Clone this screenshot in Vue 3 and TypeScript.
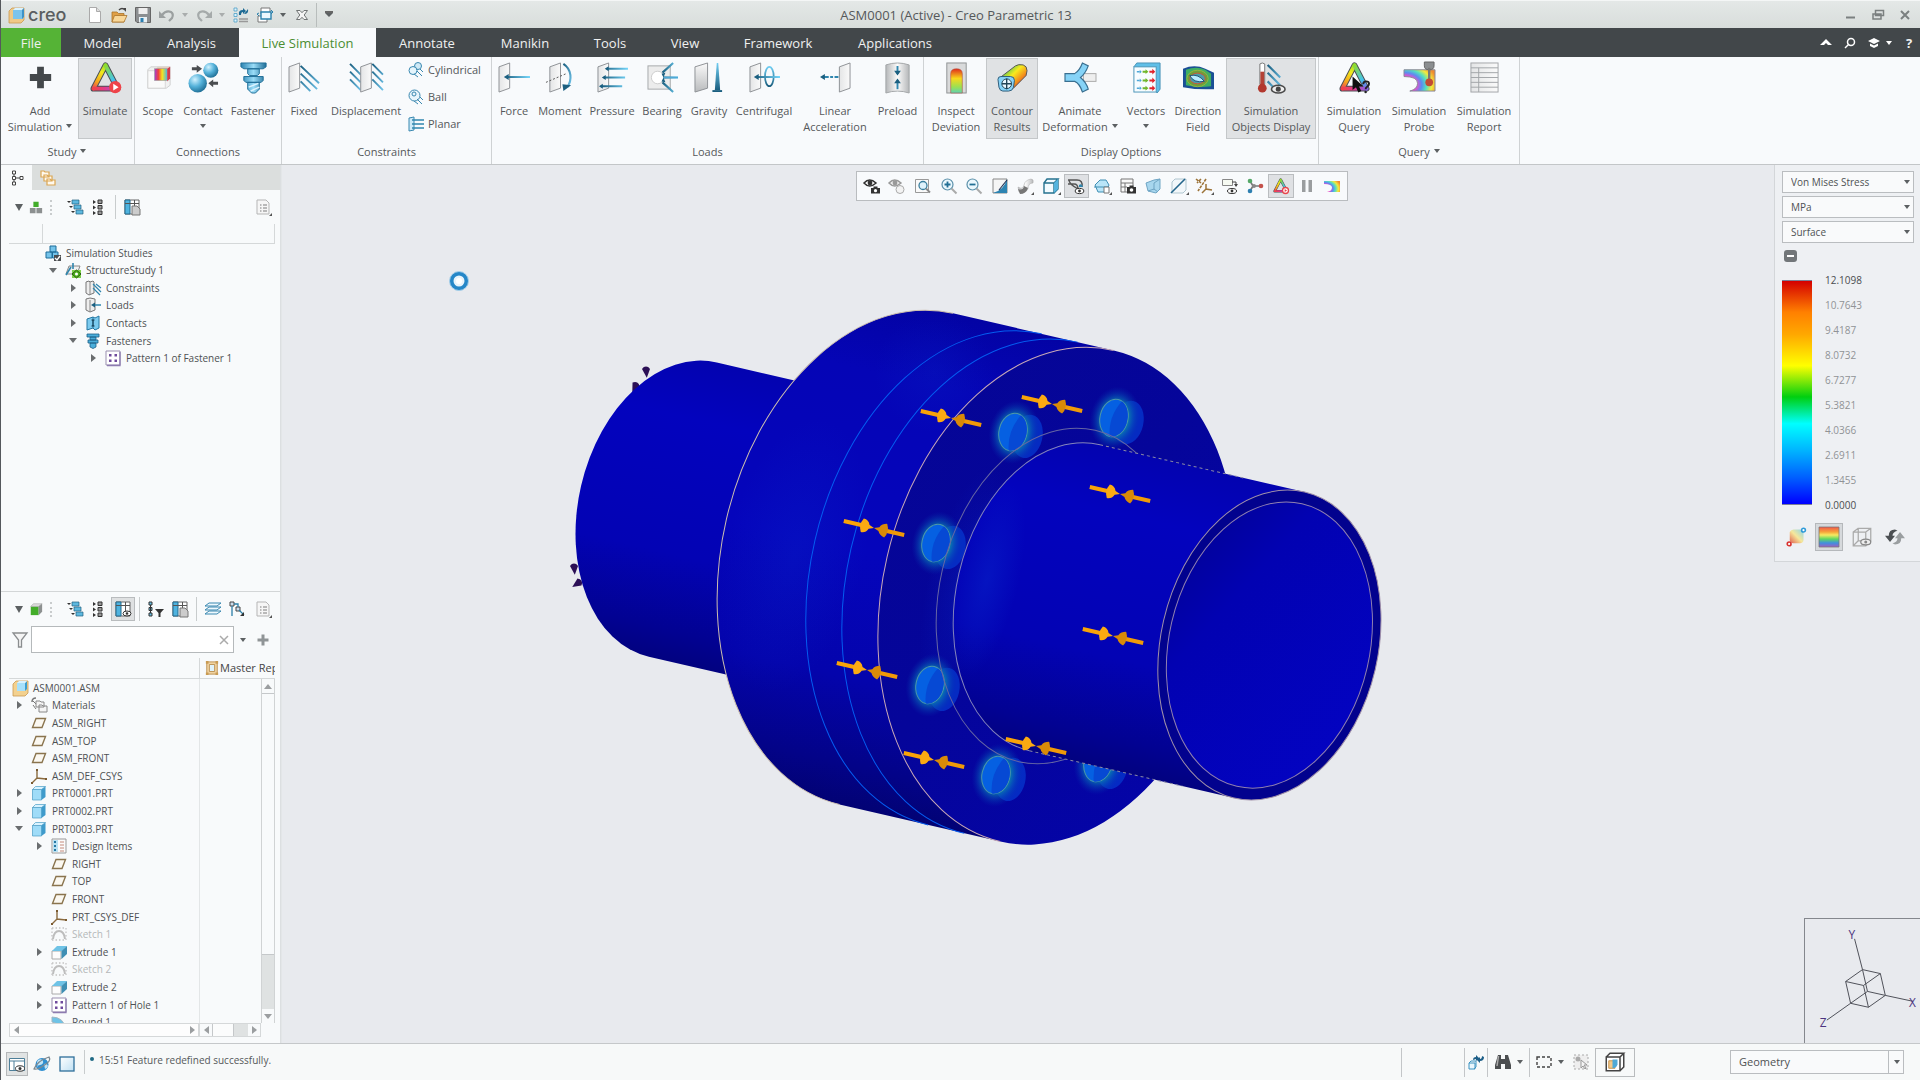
<script setup lang="ts">
import { ref } from 'vue'

interface RibbonItem { label: string; icon: string; w: number; on?: boolean; caret?: 'inline' | 'below' }
interface RibbonGroup { name: string; caret?: boolean; items: RibbonItem[]; small?: { label: string; icon: string }[] }
interface TreeRow { label: string; icon: string; level: number; exp?: 'open' | 'closed'; dim?: boolean }

const rainbow = (w: number) => `
  <path d="M16 3.500L28.500 27.500H3.500Z" fill="none" stroke="#4a4f55" stroke-width="${w + 2}" stroke-linejoin="round"/>
  <path d="M3.500 27.500L16 3.500" stroke="url(#triL)" stroke-width="${w}" stroke-linecap="round"/>
  <path d="M28.500 27.500L16 3.500" stroke="url(#triR)" stroke-width="${w}" stroke-linecap="round"/>
  <path d="M4 27.500H28" stroke="url(#triB)" stroke-width="${w}" stroke-linecap="round"/>`
const plate = (x: number) => `<path d="M${x} 5L${x + 11} 1V27L${x} 31Z" fill="url(#plate)" stroke="#8d9195"/>`
const hatch = (x: number) => `<path d="M${x} 2l11 11M${x} 10l11 11M${x} 18l11 11" stroke="url(#steel)" stroke-width="2" fill="none"/>`

const ic: Record<string, string> = {
  add: '<path d="M12.500 5h7v7.500H27v7h-7.500V27h-7v-7.500H5v-7h7.500z" fill="#44484b"/>',
  simulate: rainbow(4) + '<circle cx="26" cy="26" r="6.300" fill="#ee4349"/><path d="M24 22.500v7l5.500-3.500z" fill="#fff"/>',
  scope: '<path d="M5 8l3-3h20v19l-4 3H5z" fill="#f1f1f1" stroke="#cfcfcf"/><path d="M5 9h18v18H5z" fill="#fafafa" stroke="#d6d6d6"/><path d="M13 8l2-3h13l-3 3z" fill="#e6d0c0"/><rect x="12" y="7" width="13" height="12" fill="url(#spec)" stroke="#888" stroke-width=".5"/><path d="M25 7l3-2v12l-3 3z" fill="#d43a4a"/>',
  contact: '<circle cx="10" cy="22" r="9.500" fill="url(#ball)"/><circle cx="23.500" cy="8.500" r="7.800" fill="url(#ball)"/><path d="M4 5.500h5V3l5.500 4L9 11V8.500H4zM31 20.500h-5V18l-5 4 5 4v-2.500h5z" fill="#4a4d50"/>',
  fastener: '<path d="M3 1h26v4l-3 2H6L3 5zM10 7h12v5l-2 2h-8l-2-2zM6 15h20v4l-2 2H8l-2-2zM10 21h12v7l-4 4h-4l-4-4z" fill="url(#bolt)" stroke="#1f6e98"/><path d="M11 26l10-4M13 30l9-4" stroke="#dff4ff" stroke-width="1.500"/>',
  fixed: plate(0) + '<path d="M12 4l19 18M12 12l17 16M12 20l10 10" stroke="url(#steel)" stroke-width="2" fill="none"/>',
  displacement: hatch(-1) + plate(10) + hatch(22),
  force: plate(0) + '<path d="M8 15.500h24" stroke="url(#steelH)" stroke-width="2"/><path d="M5 15.500l5-3v6z" fill="#1b5f80"/>',
  moment: plate(5) + '<path d="M1 21L22 12" stroke="#555" stroke-dasharray="2 2"/><path d="M19 2c9 6 9 17 4 24" stroke="url(#steel)" stroke-width="2.200" fill="none"/><path d="M18 23l9 1-8 6z" fill="#1b5f80"/>',
  pressure: plate(1) + '<path d="M10 7h22M7 16h22M4 25h22" stroke="url(#steelH)" stroke-width="2"/><path d="M8 7l4-2.500v5zM5 16l4-2.500v5zM2 25l4-2.500v5z" fill="#1b5f80"/>',
  bearing: '<rect x="1" y="4" width="23" height="24" fill="#ececec" stroke="#a5a8aa"/><circle cx="11" cy="16" r="6.500" fill="#fff" stroke="#ccc"/><path d="M16 11L27 1M17 16h15M16 21l11 10" stroke="url(#steelS)" stroke-width="2.200"/><path d="M17 15.200h15v1.600H17z" fill="#4fa9d6"/><path d="M15 12l4-1-2 5zM15 20l4 1-2-5z" fill="#1b5f80"/>',
  gravity: '<path d="M1 5L14 1V27L1 31Z" fill="url(#shadeV)" stroke="#8d9195"/><path d="M23.500 1h1.500l2 28h-5.500z" fill="url(#steelV)"/><path d="M19 29h10v2H19z" fill="#1b5f80"/>',
  centrifugal: plate(1) + '<ellipse cx="21" cy="15" rx="4.500" ry="10" fill="none" stroke="url(#steelV)" stroke-width="1.800"/><path d="M8 15.500h24" stroke="url(#steelH)" stroke-width="2"/><path d="M5 15.500l5-3v6z" fill="#1b5f80"/>',
  linear: '<path d="M20 5L31 1V27L20 31Z" fill="url(#plate)" stroke="#8d9195"/><path d="M4 15.500h15" stroke="#2f86ae" stroke-width="2.200" stroke-dasharray="5 1.500 3 1.500"/><path d="M0 15.500l5-3v6z" fill="#1b5f80"/>',
  preload: '<path d="M4 3q12-4 24 0v29q-12-4-24 0z" fill="url(#cyl)" stroke="#a2a5a7"/><path d="M16 4v8M16 28v-9" stroke="#2f86ae" stroke-width="2"/><path d="M12.500 9h7L16 14zM12.500 22h7L16 17z" fill="#1b5f80"/>',
  inspect: '<rect x="6" y="1" width="20" height="31" fill="#d9dadb" stroke="#8f9294"/><path d="M10 32V12q0-5 6-5t6 5v20z" fill="url(#heat)" stroke="#b05040" stroke-width=".6"/>',
  contour: '<path d="M2 17L19 4q3-2 8-1 4 1 4 6l-1 5-13 13z" fill="url(#tube)" stroke="#555"/><path d="M1 18q0-3 3-3h10q4 0 4 4l-1 7q-1 4-5 4H6q-3 0-4-4z" fill="#86d3f7" stroke="#2d5a78"/><circle cx="10" cy="22.500" r="5" fill="#eaf8ff" stroke="#245"/><path d="M10 17v11M5 22.500h10" stroke="#245" stroke-width="1.400"/>',
  animate: '<rect x="19" y="12" width="13" height="8" fill="#eee" stroke="#aaa"/><path d="M0 12h10Q15 9 18 1l6 3q-3 8-8 12 6 5 8 12l-6 3q-3-9-8-11H0z" fill="#86d3f7" stroke="#3a6f90" stroke-width="1.200"/>',
  vectors: '<path d="M3 5l3-4h24v27l-3 4z" fill="#5fbfe8" stroke="#4b94b7"/><rect x="3" y="5" width="23" height="26" fill="#f7fcff" stroke="#4b94b7"/><path d="M6 10h3M6 19h3M6 27h3" stroke="#4ea7d8" stroke-width="1.600"/><path d="M12 10h4M12 19h4M12 27h4" stroke="#70b62c" stroke-width="2"/><path d="M19 10h4M19 19h4M19 27h4" stroke="#e0242c" stroke-width="2"/><path d="M9 8l2 2-2 2zM9 17l2 2-2 2zM9 25l2 2-2 2z" fill="#4ea7d8"/><path d="M15 7.500l3 2.500-3 2.500zM15 16.500l3 2.500-3 2.500zM15 24.500l3 2.500-3 2.500z" fill="#70b62c"/><path d="M22 7l3 3-3 3zM22 16l3 3-3 3zM22 24l3 3-3 3z" fill="#e0242c"/>',
  direction: '<path d="M0 7q12-5 23 0l9 4v17q-16 1-32-2z" fill="#1a4f96"/><path d="M3 8q11-4 20 0l6 4v13q-13 2-26-1z" fill="#3fae63"/><ellipse cx="15" cy="17" rx="11" ry="8.500" fill="#6f9e3a" stroke="#93b83f"/><ellipse cx="15" cy="17" rx="8" ry="5.500" fill="#4c9ba8" stroke="#c9563a"/><path d="M7 14q9-2 15 6-11 2-15-6z" fill="#b8ecff" stroke="#257"/>',
  objects: '<path d="M4 2q2.500-2 5 0v21H4z" fill="#fff" stroke="#777"/><path d="M4.500 10h4v16h-4z" fill="#b44236"/><circle cx="6.500" cy="27" r="4.500" fill="#b2382e"/><path d="M12 3l13 13M12 11l13 13M12 20l7 7" stroke="url(#steel)" stroke-width="2.200"/><ellipse cx="23" cy="28" rx="7" ry="4" fill="#eee" stroke="#4a4a4a" stroke-width="1.600"/><circle cx="23" cy="28" r="2.600" fill="#444"/>',
  query: rainbow(4) + '<path d="M14 15v14l3.500-3 2.500 5.500 3-1.500-2.500-5h4.500z" fill="#111"/><path d="M25 23q0-3 3-3t3 2.500q0 2-2 3-1.500 1-1.500 2.500" stroke="#222" stroke-width="2" fill="none"/><circle cx="27.500" cy="31" r="1.300" fill="#222"/>',
  probe: '<path d="M0 8h32v22H6q8-2 8-8 0-7-14-7z" fill="url(#probeG)" stroke="#889"/><path d="M21 0h10v4q0 4-5 4t-5-4z" fill="#8b8e90" stroke="#666"/><path d="M26 6v12" stroke="#777" stroke-width="2.500"/><circle cx="26" cy="21" r="4" fill="#c24a35"/>',
  report: '<rect x="2" y="1" width="28" height="30" fill="url(#plate)" stroke="#a2a5a8"/><path d="M2 6h28M2 11h28M2 16h28M2 21h28M2 26h28M10 6v25" stroke="#a2a5a8" fill="none"/>',
  cylS: '<circle cx="10" cy="4" r="3.500" fill="#cfeaf7" stroke="#3a88b0"/><circle cx="5" cy="8.500" r="4" fill="#e6f5fc" stroke="#3a88b0"/><path d="M9 9l5 5M6 12l4 3M12 7l3 3" stroke="#3a88b0"/>',
  ballS: '<circle cx="6.500" cy="6.500" r="5.500" fill="#e8f5fb" stroke="#3a88b0"/><circle cx="6" cy="5" r="2" fill="none" stroke="#3a88b0"/><path d="M9 10l5 5M12 8l3 3M6 12l4 3" stroke="#3a88b0"/>',
  planarS: '<path d="M1 2l5-1v13l-5 1z" fill="#cdeaf8" stroke="#3a88b0"/><path d="M4 4h12M4 8h12M4 12h12" stroke="#2f86ae" stroke-width="1.300"/>',
  logo: '<path d="M1 4l3-3h12v12l-3 3H1z" fill="#f0c986" stroke="#c99b52" stroke-width=".8"/><path d="M5 3h10v9H5z" fill="#7cc4ec"/><path d="M5 3l2-2h9l-2 2z" fill="#d9f2ff"/><path d="M14 3l2-2v9l-2 2z" fill="#3d92c8"/>',
  neu: '<path d="M2.500 .5h7l4 4v11h-11z" fill="#fff" stroke="#aaa"/><path d="M9.500 .5v4h4" fill="#ddd" stroke="#aaa"/>',
  open: '<path d="M1 5h5l1.500 1.500H13V15H1z" fill="#e0a047" stroke="#a97329" stroke-width=".8"/><path d="M3.500 8.500H16L13 15H1z" fill="#f8d798" stroke="#a97329" stroke-width=".8"/><path d="M8 3q3-3 6 0" stroke="#444" stroke-width="1.500" fill="none"/><path d="M12 1l3 0v4z" fill="#444"/>',
  save: '<path d="M.5 .5h15v15H2l-1.500-1.500z" fill="#8c8f91" stroke="#666"/><path d="M3.500 1h9v6h-9z" fill="#eee"/><path d="M4 10h8v5.500H4z" fill="#e8f0f4"/><path d="M5.500 11h3v4h-3z" fill="#2b7fb0"/>',
  undo: '<path d="M3 8q4-5 9-3 3 2 1 6l-3 3" stroke="#9ba0a0" stroke-width="2.200" fill="none"/><path d="M0 4v7h7z" fill="#9ba0a0"/>',
  redo: '<path d="M13 8Q9 3 4 5 1 7 3 11l3 3" stroke="#a5aaaa" stroke-width="2.200" fill="none"/><path d="M16 4v7H9z" fill="#a5aaaa"/>',
  regen: '<path d="M1 1h3v3H1zM1 6.500h3v3H1zM1 12h3v3H1z" fill="#dff3fc" stroke="#4d9fc6" stroke-width=".8"/><path d="M6 12h9M6 14.500h9" stroke="#999" stroke-width="1.500"/><path d="M6 8q-1-5 4-5V1l3 3-3 3V5Q8 5 8 8zM15 2q1 5-4 5" fill="#1d6a94"/>',
  wins: '<path d="M4 1h9v6H4z" fill="#fff" stroke="#777"/><path d="M1 9h9v6H1z" fill="#fff" stroke="#777"/><path d="M4 5h10v7H4z" fill="#eef8fd" stroke="#2d82ad" stroke-width="1.400"/><path d="M14 3l2 2-2 2M2 6l-2 1 2 2" stroke="#2d82ad" fill="none"/>',
  closeX: '<path d="M2.500 3.500h3.500l2 2.200 2-2.200h3.500L10.200 8l3.300 4.500H10l-2-2.200-2 2.200H2.500L5.800 8z" fill="#f4f4f4" stroke="#707474"/>',
  tabTree: '<path d="M3.500 1h3v3h-3zM3.500 6.500h3v3h-3zM3.500 12h3v3h-3zM11 6.500h3v3h-3z" fill="#fff" stroke="#444"/><path d="M5 4v2.500M5 9.500V12M6.500 8H11" stroke="#444"/>',
  tabFold: '<path d="M1 1h3l1 1h4v5H1zM4 5h3l1 1h4v5H4zM7 9h3l1 1h4v5H7z" fill="#fff9ee" stroke="#dba653" stroke-width="1.200"/>',
  asm3: '<path d="M5 2h6v6H5z" fill="#43ad2a"/><path d="M1 9h6.500v6H1zM8.500 9H15v6H8.500z" fill="#8c9090"/>',
  green: '<path d="M2 5h9v10H2z" fill="#43ad2a"/><path d="M2 5l3-3h10l-4 3z" fill="#ddd" stroke="#999" stroke-width=".6"/><path d="M11 5l4-3v9l-4 4z" fill="#8c9090"/>',
  cascade: '<path d="M5 1h7v4H5zM7 6h7v4H7zM9 11h7v4H9z" fill="#5db8df" stroke="#245f80" stroke-width=".7"/><path d="M0 2h4L2 4zM2 7h4L4 9zM4 12h4l-2 2z" fill="#333"/>',
  list: '<path d="M7 1h4v3.500H7zM7 6.500h4V10H7zM7 12h4v3.500H7z" fill="#999" stroke="#333"/><path d="M2 1l3 2-3 2zM2 6.500l3 2-3 2zM2 12l3 2-3 2z" fill="#333"/>',
  cols: '<path d="M1 1h14v14H1z" fill="#fff" stroke="#666"/><path d="M1 1h5v14H1z" fill="#4fb3df" stroke="#246a8d"/><path d="M1 4.500h14M10.500 1v14" stroke="#555"/><path d="M8 7h5l3 3v6H8z" fill="#ccc" stroke="#777"/>',
  colsEye: '<path d="M1 1h14v14H1z" fill="#fff" stroke="#666"/><path d="M1 1h5v14H1z" fill="#4fb3df" stroke="#246a8d"/><path d="M1 4.500h14M10.500 1v14" stroke="#555"/><ellipse cx="12" cy="12.500" rx="4" ry="2.500" fill="#fff" stroke="#333"/><circle cx="12" cy="12.500" r="1.300" fill="#333"/>',
  doc: '<path d="M2 1h9l3 3v11H2z" fill="#f6f6f6" stroke="#b5b5b5"/><path d="M5 6h1.500M8 6h4M5 9h1.500M8 9h4M5 12h1.500M8 12h4" stroke="#a5a5a5" stroke-width="1.500"/><path d="M17 14v3h-3z" fill="#555"/>',
  treeFilter: '<path d="M1 1h3v3H1zM1 6.500h3v3H1zM1 12h3v3H1z" fill="#66bfe4" stroke="#333"/><path d="M2.500 4v8" stroke="#333"/><path d="M7 8h9l-3.500 4v4h-2v-4z" fill="#333"/>',
  layers: '<path d="M0 13l4-3h12l-4 3zM0 9l4-3h12l-4 3zM0 5l4-3h12l-4 3z" fill="#eef8fd" stroke="#3a88b0"/>',
  rel: '<path d="M1 1h4v4H1zM7 6h4v4H7z" fill="#cde" stroke="#444"/><path d="M3 5v10M5 3h4v3M10 9l5 5" stroke="#2b7fa8" fill="none" stroke-width="1.300"/><path d="M15 11v4h-4z" fill="#333"/>',
  funnel: '<path d="M1 1h14L9.500 8v7h-3V8z" fill="#f4f4f4" stroke="#8a8d8f" stroke-width="1.300"/>',
  plusS: '<path d="M6.500 2.500h3v4h4v3h-4v4h-3v-4h-4v-3h4z" fill="#8f9496"/>',
  frame: '<path d="M2 1h12v14H2z" fill="#f0d3a0" stroke="#b98b4a"/><path d="M5 4h6v8H5z" fill="#dff2fa" stroke="#b98b4a"/><path d="M1 0h3v3H1zM12 0h3v3h-3zM1 13h3v3H1zM12 13h3v3h-3z" fill="#c99b52"/>',
  studies: '<path d="M5 1h6v6H5zM1 7h6v6H1zM7.500 7H13v6H7.500z" fill="#74c3ea" stroke="#1c6d99"/><path d="M9 10h7v6H9z" fill="#4a4d50"/><path d="M10 13l2 2 3-4" stroke="#fff" stroke-width="1.300" fill="none"/>',
  study: '<path d="M4 4h11l-3 8H1z" fill="#f1f1f1" stroke="#888"/><path d="M1 13l5-8M8 1v6" stroke="#2f86ae" stroke-width="1.600"/><path d="M7 8h9v8H7z" fill="#7ed04a"/><path d="M11.500 8l4.500 4-4.500 4L7 12z" fill="#4cae1a" stroke="#2c5a14"/><circle cx="11.500" cy="12" r="1.500" fill="#fff"/>',
  constraints: '<path d="M1 2l3-1 1 1 3-1 1 1v11l-5 2-3-2z" fill="#eee" stroke="#777"/><path d="M5 2v13" stroke="#888"/><path d="M8 4l8 8M8 8l7 7M11 4l5 4" stroke="#2f86ae" stroke-width="1.200"/>',
  loads: '<path d="M1 2l4-1 5 1v11l-5 2-4-2z" fill="#eee" stroke="#777"/><path d="M5 3v12" stroke="#888"/><path d="M8 8h8" stroke="#2f86ae" stroke-width="1.500"/><path d="M6 8l4-2.500v5z" fill="#1b5f80"/>',
  contacts: '<path d="M2 4l6-2v11l-6 2zM8 2l2 1 4-2v12l-4 2-2-2" fill="#7ccbef" stroke="#2478a3"/><path d="M8 5v6M6.500 5h3M6.500 11h3" stroke="#134"/>',
  bolt16: '<path d="M2 1h12v3H2zM5 4h6v3H5zM3 7h10v3H3zM5 10h6v4l-3 1.500L5 14z" fill="#4aaedb" stroke="#1c5f88" stroke-width=".8"/>',
  pattern: '<path d="M1 1h14v14H1z" fill="#fff" stroke="#9a8fb0"/><path d="M15 2v13.500H2" stroke="#8d7bb0" stroke-width="1.300" fill="none"/><path d="M4 4h2.500v2.500H4zM9.500 4H12v2.500H9.500zM4 9.500h2.500V12H4zM9.500 9.500H12V12H9.500z" fill="#6f4a9c"/>',
  asm: '<path d="M1 4l3-3h12v12l-3 3H1z" fill="#f3d18f" stroke="#c99b52" stroke-width=".8"/><path d="M5 3h8v8H5z" fill="#a7e0fa"/><path d="M13 3l2-2v8l-2 2z" fill="#3d9fd0"/><path d="M5 3l2-2h8l-2 2z" fill="#d9f2ff"/>',
  materials: '<path d="M1 5q0-4 4-4" stroke="#777" stroke-width="1.500" fill="none"/><path d="M2 4l4 4M2 8l3 4" stroke="#777"/><path d="M5 4h4l1 1h3v5H5zM8 8h3l1 1h4v6H8z" fill="#f5f5f5" stroke="#888"/>',
  plane: '<path d="M5 3.500h9.500l-3.500 9H1.500z" fill="#fbf8f1" stroke="#8a744e" stroke-width="1.400"/>',
  csys: '<path d="M6 1v9l9 1M6 10l-5 5" stroke="#8a6a3e" stroke-width="1.400" fill="none"/><path d="M5 1h2v2H5zM14 10h2v2h-2zM0 14h2v2H0z" fill="#7a5a30"/>',
  part: '<path d="M1.500 4.500h9V15h-9z" fill="#9fdcf8" stroke="#4b9cc4" stroke-width=".7"/><path d="M1.500 4.500l3-3h10l-4 3z" fill="#d9f3ff" stroke="#4b9cc4" stroke-width=".7"/><path d="M10.500 4.500l4-3V12l-4 3z" fill="#3f9bcb"/>',
  design: '<path d="M1 1h14v14H1z" fill="#fbfbfb" stroke="#999"/><path d="M2 2h5v12H2z" fill="#b9e2f4"/><path d="M3 3h2v2H3zM3 7h2v2H3zM3 11h2v2H3z" fill="#2577a4"/><path d="M9 4h4M9 7h4M9 10h4M9 13h4" stroke="#c48a7a"/>',
  sketch: '<path d="M2 13q1-8 6-8t6 8" fill="none" stroke="#bdbdbd" stroke-width="2"/><path d="M1 2h14M1 14h14M1 2v12M15 2v12" stroke="#c4c4c4" stroke-width="1.300" stroke-dasharray="1.500 2"/>',
  extrude: '<path d="M1 7h9v8H1z" fill="#fdfdfd" stroke="#aaa"/><path d="M1 7l5-5h10l-5 5z" fill="#6fc3e6"/><path d="M10.500 7l5.500-5v8l-5.500 5z" fill="#3f8fb4"/>',
  round: '<path d="M1 3q12 0 14 13H8Q8 9 1 8z" fill="#6fc3e6" stroke="#9fb6c2"/>',
  eyeCam: '<path d="M0 5q5.500-6 12 0-6.500 6-12 0z" fill="#fff" stroke="#333" stroke-width="1.600"/><circle cx="6" cy="5" r="2.400" fill="#333"/><path d="M7 10h9v5.500H7zM9.500 8.500h4V10h-4z" fill="#333"/><circle cx="11.500" cy="12.700" r="1.600" fill="#fff"/>',
  eyeGray: '<path d="M0 5q5.500-6 12 0-6.500 6-12 0z" fill="#eee" stroke="#999" stroke-width="1.500"/><circle cx="6" cy="5" r="2.400" fill="#999"/><circle cx="11" cy="11.500" r="4" fill="#f3f3f3" stroke="#aaa"/>',
  zfit: '<path d="M.5 1.500h13v13H.5z" fill="#fafafa" stroke="#999"/><circle cx="8" cy="7.500" r="4" fill="#dff2fb" stroke="#3a7f9f" stroke-width="1.300"/><path d="M11 10.500l4 4" stroke="#8a8a8a" stroke-width="1.800"/>',
  zin: '<circle cx="6.500" cy="6.500" r="5.500" fill="#eaf7fd" stroke="#5a90aa" stroke-width="1.200"/><path d="M3.500 6.500h6M6.500 3.500v6" stroke="#226f95" stroke-width="1.800"/><path d="M10.500 10.500l5 5" stroke="#aaa" stroke-width="2"/>',
  zout: '<circle cx="6.500" cy="6.500" r="5.500" fill="#eaf7fd" stroke="#5a90aa" stroke-width="1.200"/><path d="M3.500 6.500h6" stroke="#226f95" stroke-width="1.800"/><path d="M10.500 10.500l5 5" stroke="#aaa" stroke-width="2"/>',
  repaint: '<path d="M1 1h14v14H1z" fill="#f5f5f5" stroke="#888"/><path d="M15 1Q12 12 1 15h14z" fill="#2c84b2"/><path d="M15 2L7 12" stroke="#235" stroke-width="1.200"/>',
  shade: '<path d="M1 9q5 3 6-2t7-6q3 0 2 4-5 0-5 6-3 5-9 3z" fill="url(#cyl)" stroke="#aaa" stroke-width=".5"/><path d="M1 11q5 2 6-3l4 2q-2 6-8 6z" fill="#777"/><path d="M17 14v3h-3z" fill="#555"/>',
  cube: '<path d="M1 5h10v10H1zM1 5l3-4h11l-4 4M15 1v10l-4 4" fill="#f2fbff" stroke="#25728f" stroke-width="1.400"/><path d="M11 5l4-4v10l-4 4z" fill="#54b4de"/><path d="M18 14v3h-3z" fill="#555"/>',
  saved: '<path d="M0 2h9q6 0 5 7M0 6h6q4 0 4 5M1 2q0 4 9 9" stroke="#555" stroke-width="1.400" fill="none"/><path d="M11 7q3-2 4 2h-4z" fill="#2f86ae"/><ellipse cx="11.500" cy="13" rx="4.300" ry="2.600" fill="#fff" stroke="#333"/><circle cx="11.500" cy="13" r="1.400" fill="#333"/>',
  views: '<path d="M1 7l5-5h6l3 5-3 7H4z" fill="#b9e5f8" stroke="#3f8fb4"/><path d="M0 9h15" stroke="#3f8fb4"/><path d="M10 9h5v6h-5z" fill="#fff" stroke="#777"/><path d="M18 14v3h-3z" fill="#555"/>',
  camTab: '<path d="M1 1h12v13H1z" fill="#fafafa" stroke="#777"/><path d="M1 5h12M1 9h6M5 5v9" stroke="#777"/><path d="M7 9h9v6.500H7zM9.500 7.500h4V9h-4z" fill="#333"/><circle cx="11.500" cy="12" r="1.800" fill="#fff"/>',
  cubeBlue: '<path d="M1 5l8-3 6-1v10l-4 4-8-2z" fill="#a7d6ee" stroke="#6fa5c4"/><path d="M9 5v7M9 5l6-4M3 13l6-2 4 3" stroke="#6fa5c4" fill="none"/>',
  section: '<path d="M1 4l3-3h11v11l-3 3H1z" fill="#f2f7fa" stroke="#b0c6d0"/><path d="M0 15L14 1" stroke="#25668b" stroke-width="1.600"/><path d="M18 14v3h-3z" fill="#555"/>',
  datum: '<path d="M0 1l5 4M5 1L1 5M10 1L2 13" stroke="#9c7338" stroke-width="1.600" stroke-dasharray="3 1"/><path d="M10 6v5l6 1M10 11l-4 4" stroke="#9c7338" stroke-width="1.500" fill="none"/><path d="M18 14v3h-3z" fill="#555"/>',
  annot: '<path d="M.5 1.500h10v6H.5z" fill="#f6faf2" stroke="#888"/><path d="M10 4h4v4" stroke="#444" fill="none"/><path d="M12 6h4l-2 3z" fill="#444"/><ellipse cx="10" cy="13" rx="4.500" ry="2.500" fill="#fff" stroke="#333"/><circle cx="10" cy="13" r="1.400" fill="#333"/>',
  spin: '<path d="M6 8L3 3M6 8h8M6 8l-3 5" stroke="#777" stroke-width="1.600"/><circle cx="3" cy="3" r="2.300" fill="#55a868"/><circle cx="14" cy="8" r="2.300" fill="#c4524c"/><circle cx="3" cy="13" r="2.300" fill="#2e7fb0"/><circle cx="7" cy="8" r="2" fill="#888"/>',
  simS: `<g transform="scale(.480)">${rainbow(3.5)}</g><circle cx="12.500" cy="12.500" r="3" fill="#fff" stroke="#e8454b" stroke-width="1.300"/><path d="M11.700 11v3l2.300-1.500z" fill="#e8454b"/>`,
  pause: '<path d="M3 2h3.500v12H3zM9.500 2H13v12H9.500z" fill="#9a9d9f"/>',
  probeS: '<path d="M0 3h16v11H3q5-1 5-4.500T0 6z" fill="url(#probeG)"/>',
  cfield: '<path d="M3 4q1-2 3-2h5q3 0 3 3v5q0 3-3 3H6q-3 0-3-3z" fill="url(#softR)"/><circle cx="14" cy="2.500" r="1.500" fill="#fff" stroke="#2f9bd8" stroke-width="1.300"/><circle cx="2.500" cy="13.500" r="1.500" fill="#fff" stroke="#d8322f" stroke-width="1.300"/>',
  bands: '<path d="M0 0h16v16H0z" fill="url(#bandsG)" stroke="#777" stroke-width=".6"/>',
  wire: '<path d="M1 4h10v11H1zM5 1h10v10H5zM1 4l4-3M11 4l4-3M1 15l4-4M11 15l4-4" fill="none" stroke="#aaa"/><ellipse cx="11" cy="12" rx="4" ry="2.300" fill="#eee" stroke="#888"/><circle cx="11" cy="12" r="1.200" fill="#888"/>',
  swap: '<path d="M8 2Q3 2 3 7H0l4 5 4-5H6q0-3 4-4z" fill="#4c5053"/><path d="M8 14q5 0 5-5h3l-4-5-4 5h2q0 3-4 4z" fill="#9a9ea0"/>',
  paneEye: '<path d="M.5 2.500h15v12H.5z" fill="#fff" stroke="#4d7f99"/><path d="M.5 5h15M5 5v9" stroke="#4d7f99"/><ellipse cx="11" cy="12.500" rx="4.500" ry="2.700" fill="#fff" stroke="#333"/><circle cx="11" cy="12.500" r="1.500" fill="#333"/>',
  globe: '<circle cx="8" cy="8.500" r="6.500" fill="#2f8fd0"/><path d="M4 4q4-2 5 1t-3 4-3 2 0-5zM10 8q3-1 4 2-1 3-3 3z" fill="#bfe3f7"/><path d="M0 13Q3 5 15 1q3 4-6 9-6 4-9 3z" fill="none" stroke="#7c8890" stroke-width="1.300"/>',
  square: '<rect x="1" y="1" width="14" height="14" fill="url(#sqG)" stroke="#2f6f9a" stroke-width="1.300"/>',
  regenS: '<path d="M1 9h6v6H1z" fill="#e8f6fd" stroke="#3b93c2"/><path d="M1 9l2-2h5v6l-2 2" fill="none" stroke="#3b93c2"/><path d="M5 6q0-3 3-3V1l3 3-3 3V5zM16 3q0 4-4 4v2L9 6l3-3v2q2 0 2-3z" fill="#1d5f88"/>',
  bino: '<path d="M3 1h3v4h4V1h3l3 10v4h-6v-5H6v5H0v-4z" fill="#4b4e50"/><path d="M3.500 2L2 12" stroke="#aaa" stroke-width="1.500"/>',
  marquee: '<path d="M1 3h14v10H1z" fill="none" stroke="#444" stroke-width="1.400" stroke-dasharray="3 2"/>',
  pickGray: '<path d="M1 1h14v14H1z" fill="#eee" stroke="#aaa" stroke-dasharray="2 2"/><circle cx="5" cy="5" r="2.500" fill="#aaa"/><path d="M8 6v8l2-2 2 3 1-1-2-3h3z" fill="#f5f5f5" stroke="#999"/>',
  selBox: '<path d="M1 4h11v11H1zM1 4l3-3h11l-3 3M15 1v11l-3 3" fill="#fff" stroke="#444" stroke-width="1.200"/><path d="M3 7h5v6H3z" fill="#f3c98b" stroke="#c48a3f" stroke-width=".7"/><path d="M6 6h4v4q-1 3-4 3z" fill="#4fa9d6"/>',
}

const quick = [
  { n: 'New', i: 'neu' }, { n: 'Open', i: 'open' }, { n: 'Save', i: 'save' },
  { n: 'Undo', i: 'undo', caret: true, dim: true }, { n: 'Redo', i: 'redo', caret: true, dim: true },
  { n: 'Regenerate', i: 'regen' }, { n: 'Windows', i: 'wins', caret: true }, { n: 'Close window', i: 'closeX' },
]

const tabs = [
  { t: 'File', w: 60 }, { t: 'Model', w: 83 }, { t: 'Analysis', w: 95 }, { t: 'Live Simulation', w: 137 },
  { t: 'Annotate', w: 102 }, { t: 'Manikin', w: 94 }, { t: 'Tools', w: 76 }, { t: 'View', w: 74 },
  { t: 'Framework', w: 112 }, { t: 'Applications', w: 122 },
]
const activeTab = ref('Live Simulation')

const groups: RibbonGroup[] = [
  { name: 'Study', caret: true, items: [
    { label: 'Add\nSimulation', icon: 'add', w: 76, caret: 'inline' },
    { label: 'Simulate', icon: 'simulate', w: 54, on: true } ] },
  { name: 'Connections', items: [
    { label: 'Scope', icon: 'scope', w: 42 },
    { label: 'Contact', icon: 'contact', w: 48, caret: 'below' },
    { label: 'Fastener', icon: 'fastener', w: 52 } ] },
  { name: 'Constraints', items: [
    { label: 'Fixed', icon: 'fixed', w: 40 },
    { label: 'Displacement', icon: 'displacement', w: 84 } ],
    small: [ { label: 'Cylindrical', icon: 'cylS' }, { label: 'Ball', icon: 'ballS' }, { label: 'Planar', icon: 'planarS' } ] },
  { name: 'Loads', items: [
    { label: 'Force', icon: 'force', w: 40 }, { label: 'Moment', icon: 'moment', w: 52 },
    { label: 'Pressure', icon: 'pressure', w: 52 }, { label: 'Bearing', icon: 'bearing', w: 48 },
    { label: 'Gravity', icon: 'gravity', w: 46 }, { label: 'Centrifugal', icon: 'centrifugal', w: 64 },
    { label: 'Linear\nAcceleration', icon: 'linear', w: 78 }, { label: 'Preload', icon: 'preload', w: 47 } ] },
  { name: 'Display Options', items: [
    { label: 'Inspect\nDeviation', icon: 'inspect', w: 60 },
    { label: 'Contour\nResults', icon: 'contour', w: 52, on: true },
    { label: 'Animate\nDeformation', icon: 'animate', w: 84, caret: 'inline' },
    { label: 'Vectors', icon: 'vectors', w: 48, caret: 'below' },
    { label: 'Direction\nField', icon: 'direction', w: 56 },
    { label: 'Simulation\nObjects Display', icon: 'objects', w: 90, on: true } ] },
  { name: 'Query', caret: true, items: [
    { label: 'Simulation\nQuery', icon: 'query', w: 66 },
    { label: 'Simulation\nProbe', icon: 'probe', w: 64 },
    { label: 'Simulation\nReport', icon: 'report', w: 66 } ] },
]

const studyTree: TreeRow[] = [
  { label: 'Simulation Studies', icon: 'studies', level: 0 },
  { label: 'StructureStudy 1', icon: 'study', level: 1, exp: 'open' },
  { label: 'Constraints', icon: 'constraints', level: 2, exp: 'closed' },
  { label: 'Loads', icon: 'loads', level: 2, exp: 'closed' },
  { label: 'Contacts', icon: 'contacts', level: 2, exp: 'closed' },
  { label: 'Fasteners', icon: 'bolt16', level: 2, exp: 'open' },
  { label: 'Pattern 1 of Fastener 1', icon: 'pattern', level: 3, exp: 'closed' },
]
const modelTree: TreeRow[] = [
  { label: 'ASM0001.ASM', icon: 'asm', level: 0 },
  { label: 'Materials', icon: 'materials', level: 1, exp: 'closed' },
  { label: 'ASM_RIGHT', icon: 'plane', level: 1 },
  { label: 'ASM_TOP', icon: 'plane', level: 1 },
  { label: 'ASM_FRONT', icon: 'plane', level: 1 },
  { label: 'ASM_DEF_CSYS', icon: 'csys', level: 1 },
  { label: 'PRT0001.PRT', icon: 'part', level: 1, exp: 'closed' },
  { label: 'PRT0002.PRT', icon: 'part', level: 1, exp: 'closed' },
  { label: 'PRT0003.PRT', icon: 'part', level: 1, exp: 'open' },
  { label: 'Design Items', icon: 'design', level: 2, exp: 'closed' },
  { label: 'RIGHT', icon: 'plane', level: 2 },
  { label: 'TOP', icon: 'plane', level: 2 },
  { label: 'FRONT', icon: 'plane', level: 2 },
  { label: 'PRT_CSYS_DEF', icon: 'csys', level: 2 },
  { label: 'Sketch 1', icon: 'sketch', level: 2, dim: true },
  { label: 'Extrude 1', icon: 'extrude', level: 2, exp: 'closed' },
  { label: 'Sketch 2', icon: 'sketch', level: 2, dim: true },
  { label: 'Extrude 2', icon: 'extrude', level: 2, exp: 'closed' },
  { label: 'Pattern 1 of Hole 1', icon: 'pattern', level: 2, exp: 'closed' },
  { label: 'Round 1', icon: 'round', level: 2 },
]

const viewTools = ['eyeCam', 'eyeGray', 'zfit', 'zin', 'zout', 'repaint', 'shade', 'cube', 'saved', 'views', 'camTab', 'cubeBlue', 'section', 'datum', 'annot', 'spin', 'simS', 'pause', 'probeS']
const viewOn = ['saved', 'simS']
const legend = ['12.1098', '10.7643', '9.4187', '8.0732', '6.7277', '5.3821', '4.0366', '2.6911', '1.3455', '0.0000']
const legendSelects = [
  { name: 'Result quantity', value: 'Von Mises Stress' },
  { name: 'Units', value: 'MPa' },
  { name: 'Display location', value: 'Surface' },
]

// Flange centre in canvas space; the pipe axis leans 13 degrees below horizontal.
const axis = 'translate(1057 596) rotate(13)'
const K = 0.692
const barrel = (a: number, b: number, r: number) => `M${a} ${-r}A${K * r} ${r} 0 0 0 ${a} ${r}L${b} ${r}V${-r}Z`
const arc = (a: number, r: number) => `M${a} ${-r}A${K * r} ${r} 0 0 0 ${a} ${r}`
const holes = [[1013, 432], [1114, 418], [936, 543], [930, 685], [996, 775], [1098, 763]]
const preloads = [[951, 418], [1052, 404], [874, 528], [1120, 494], [867, 670], [1113, 636], [934, 760], [1036, 746]]
const cones = [[646, 373, 0], [634, 388, 30], [574, 570, 0], [576, 584, 60]]
</script>

<template>
  <div class="app">
    <svg class="defs" width="0" height="0" aria-hidden="true">
      <defs>
        <linearGradient id="triL" gradientUnits="userSpaceOnUse" x1="3" y1="28" x2="16" y2="3"><stop offset="0" stop-color="#e8385e" /><stop offset=".3" stop-color="#f6a21d" /><stop offset=".7" stop-color="#f2ea1c" /><stop offset="1" stop-color="#8fdc2b" /></linearGradient>
        <linearGradient id="triR" gradientUnits="userSpaceOnUse" x1="28" y1="28" x2="16" y2="3"><stop offset="0" stop-color="#7a66e8" /><stop offset=".4" stop-color="#45c5e8" /><stop offset="1" stop-color="#8fdc2b" /></linearGradient>
        <linearGradient id="triB" gradientUnits="userSpaceOnUse" x1="4" y1="0" x2="28" y2="0"><stop offset="0" stop-color="#f0424a" /><stop offset=".5" stop-color="#e13a90" /><stop offset="1" stop-color="#8a62e0" /></linearGradient>
        <linearGradient id="plate"><stop offset="0" stop-color="#e4e5e6" /><stop offset="1" stop-color="#fafafa" /></linearGradient>
        <linearGradient id="shadeV" x2="0" y2="1"><stop offset="0" stop-color="#fafafa" /><stop offset="1" stop-color="#b9bbbd" /></linearGradient>
        <linearGradient id="steel" x2="1" y2="1"><stop offset="0" stop-color="#1b5f80" /><stop offset="1" stop-color="#6fc3ea" /></linearGradient>
        <linearGradient id="steelS"><stop offset="0" stop-color="#1b5f80" /><stop offset="1" stop-color="#6fd0f5" /></linearGradient>
        <linearGradient id="steelH" gradientUnits="userSpaceOnUse" x1="6" y1="0" x2="32" y2="0"><stop offset="0" stop-color="#1b5f80" /><stop offset="1" stop-color="#74d6fb" /></linearGradient>
        <linearGradient id="steelV" x2="0" y2="1"><stop offset="0" stop-color="#6fcdf2" /><stop offset="1" stop-color="#1b5f80" /></linearGradient>
        <linearGradient id="bolt"><stop offset="0" stop-color="#2c84b2" /><stop offset=".5" stop-color="#9adcf7" /><stop offset="1" stop-color="#1f6e98" /></linearGradient>
        <linearGradient id="cyl"><stop offset="0" stop-color="#b5b7b9" /><stop offset=".5" stop-color="#fbfbfb" /><stop offset="1" stop-color="#b5b7b9" /></linearGradient>
        <linearGradient id="spec"><stop offset="0" stop-color="#a33fd0" /><stop offset=".3" stop-color="#f0403e" /><stop offset=".6" stop-color="#f7e51d" /><stop offset="1" stop-color="#49b7e8" /></linearGradient>
        <linearGradient id="heat" x2="0" y2="1"><stop offset="0" stop-color="#e02a1c" /><stop offset=".4" stop-color="#f8d81c" /><stop offset=".75" stop-color="#9be052" /><stop offset="1" stop-color="#5fd2b5" /></linearGradient>
        <linearGradient id="tube" x1=".2" y1=".2" x2=".9" y2=".8"><stop offset="0" stop-color="#3fc25a" /><stop offset=".4" stop-color="#f8ea1d" /><stop offset=".75" stop-color="#f28a1c" /><stop offset="1" stop-color="#d8362a" /></linearGradient>
        <radialGradient id="probeG" cx="0" cy=".7" r="1.100"><stop offset=".2" stop-color="#f26a5e" /><stop offset=".38" stop-color="#e34fd0" /><stop offset=".52" stop-color="#5b8df0" /><stop offset=".66" stop-color="#54dfc0" /><stop offset=".82" stop-color="#f4ea3c" /><stop offset="1" stop-color="#f08a2e" /></radialGradient>
        <radialGradient id="ball" cx=".35" cy=".3" r=".75"><stop offset="0" stop-color="#d2f2ff" /><stop offset=".5" stop-color="#55b2da" /><stop offset="1" stop-color="#1c6b92" /></radialGradient>
        <linearGradient id="softR" x2="1" y1="1" y2="0"><stop offset="0" stop-color="#e0604f" /><stop offset=".5" stop-color="#f6e79a" /><stop offset="1" stop-color="#8bd6ee" /></linearGradient>
        <linearGradient id="bandsG" x2="0" y2="1"><stop offset="0" stop-color="#f0574a" /><stop offset=".25" stop-color="#f7a53a" /><stop offset=".4" stop-color="#f7ea62" /><stop offset=".6" stop-color="#5fd860" /><stop offset=".8" stop-color="#3f8fe0" /><stop offset="1" stop-color="#a05fc0" /></linearGradient>
        <linearGradient id="sqG" x2="1" y2="1"><stop offset="0" stop-color="#fff" /><stop offset="1" stop-color="#bfe0f3" /></linearGradient>
      </defs>
    </svg>

    <header class="title">
      <div class="lead">
        <div class="brand"><svg class="i16" viewBox="0 0 16 16" v-html="ic.logo" /><span>creo</span></div>
        <nav class="quick" aria-label="Quick access">
          <button v-for="q in quick" :key="q.n" type="button" :aria-label="q.n" :class="{ dim: q.dim }">
            <svg class="i16" viewBox="0 0 16 16" v-html="ic[q.i]" /><i v-if="q.caret" class="caret" />
          </button>
          <button type="button" class="custom" aria-label="Customize"><i class="caret bar" /></button>
        </nav>
      </div>
      <h1>ASM0001 (Active) - Creo Parametric 13</h1>
      <div class="win">
        <button type="button" aria-label="Minimize"><svg class="i12" viewBox="0 0 12 12"><path d="M1 8.500h9" stroke="#7b8080" stroke-width="2" /></svg></button>
        <button type="button" aria-label="Restore"><svg class="i12" viewBox="0 0 12 12"><path d="M3.500 1.500h8v5h-8zM1 5h8v5H1z" fill="#dde1e0" stroke="#7b8080" stroke-width="1.500" /></svg></button>
        <button type="button" aria-label="Close"><svg class="i12" viewBox="0 0 12 12"><path d="M2 2l8 8M10 2l-8 8" stroke="#7b8080" stroke-width="2" /></svg></button>
      </div>
    </header>

    <nav class="tabs" aria-label="Ribbon tabs">
      <button v-for="t in tabs" :key="t.t" type="button" :style="{ width: t.w + 'px' }"
        :class="{ file: t.t === 'File', active: t.t === activeTab }" @click="activeTab = t.t">{{ t.t }}</button>
      <div class="help">
        <button type="button" aria-label="Collapse ribbon"><svg class="i12" viewBox="0 0 12 12"><path d="M0 8l6-6 6 6H8L6 6 4 8z" fill="#fff" /></svg></button>
        <button type="button" aria-label="Search"><svg class="i12" viewBox="0 0 12 12"><circle cx="7" cy="5" r="3.500" fill="none" stroke="#fff" stroke-width="1.500" /><path d="M5 7l-4 4" stroke="#fff" stroke-width="1.500" /></svg></button>
        <button type="button" class="learn" aria-label="Learning"><svg class="i12" viewBox="0 0 12 12"><path d="M0 4l6-3 6 3-6 3zM2 6.500l4 2 4-2V9l-4 2-4-2z" fill="#fff" /></svg><i class="caret light" /></button>
        <button type="button" class="q">?</button>
      </div>
    </nav>

    <div class="ribbon">
      <section v-for="g in groups" :key="g.name" class="group">
        <div class="items">
          <button v-for="b in g.items" :key="b.label" type="button" class="big" :class="{ on: b.on }" :style="{ width: b.w + 'px' }">
            <svg class="i32" viewBox="0 0 32 32" v-html="ic[b.icon]" />
            <span class="lbl">{{ b.label }}<i v-if="b.caret === 'inline'" class="caret in" /></span>
            <i v-if="b.caret === 'below'" class="caret under" />
          </button>
          <div v-if="g.small" class="smalls">
            <button v-for="s in g.small" :key="s.label" type="button"><svg class="i16" viewBox="0 0 16 16" v-html="ic[s.icon]" />{{ s.label }}</button>
          </div>
        </div>
        <div class="gname">{{ g.name }}<i v-if="g.caret" class="caret in" /></div>
      </section>
    </div>

    <div class="body">
      <aside class="side">
        <section class="studies">
          <div class="ptabs">
            <button type="button" class="cur" aria-label="Model tree"><svg class="i16" viewBox="0 0 16 16" v-html="ic.tabTree" /></button>
            <button type="button" aria-label="Folders"><svg class="i16" viewBox="0 0 16 16" v-html="ic.tabFold" /></button>
          </div>
          <div class="ptool">
            <i class="caret big-c" /><svg class="i14" viewBox="0 0 16 16" v-html="ic.asm3" /><i class="grip" />
            <button type="button" aria-label="Expand"><svg class="i16" viewBox="0 0 16 16" v-html="ic.cascade" /></button>
            <button type="button" aria-label="Collapse"><svg class="i16" viewBox="0 0 16 16" v-html="ic.list" /></button>
            <i class="vr" />
            <button type="button" aria-label="Columns"><svg class="i16" viewBox="0 0 16 16" v-html="ic.cols" /></button>
            <button type="button" class="last" aria-label="Show"><svg class="i16" viewBox="0 0 16 16" v-html="ic.doc" /></button>
          </div>
          <div class="colhead"><span /></div>
          <ul class="tree first">
            <li v-for="r in studyTree" :key="r.label" :class="['l' + r.level]">
              <i v-if="r.level" class="exp" :class="r.exp" /><svg class="i16" viewBox="0 0 16 16" v-html="ic[r.icon]" /><span>{{ r.label }}</span>
            </li>
          </ul>
        </section>

        <section class="model">
          <div class="ptool two">
            <i class="caret big-c" /><svg class="i14" viewBox="0 0 16 16" v-html="ic.green" /><i class="grip" />
            <button type="button" aria-label="Expand"><svg class="i16" viewBox="0 0 16 16" v-html="ic.cascade" /></button>
            <button type="button" aria-label="Collapse"><svg class="i16" viewBox="0 0 16 16" v-html="ic.list" /></button>
            <button type="button" class="on" aria-label="Columns shown"><svg class="i16" viewBox="0 0 16 16" v-html="ic.colsEye" /></button>
            <i class="vr" />
            <button type="button" aria-label="Tree filters"><svg class="i16" viewBox="0 0 16 16" v-html="ic.treeFilter" /></button>
            <button type="button" aria-label="Columns"><svg class="i16" viewBox="0 0 16 16" v-html="ic.cols" /></button>
            <i class="vr" />
            <button type="button" aria-label="Layers"><svg class="i16" viewBox="0 0 16 16" v-html="ic.layers" /></button>
            <button type="button" aria-label="Relations"><svg class="i16" viewBox="0 0 16 16" v-html="ic.rel" /></button>
            <button type="button" class="last" aria-label="Show"><svg class="i16" viewBox="0 0 16 16" v-html="ic.doc" /></button>
          </div>
          <div class="search">
            <svg class="i16" viewBox="0 0 16 16" v-html="ic.funnel" />
            <div class="box"><input type="text" aria-label="Filter tree"><button type="button" aria-label="Clear"><svg class="i12" viewBox="0 0 12 12"><path d="M2 2l8 8M10 2l-8 8" stroke="#aaa" stroke-width="1.500" /></svg></button></div>
            <i class="caret" /><svg class="i16 pl" viewBox="0 0 16 16" v-html="ic.plusS" />
          </div>
          <div class="cols">
            <div class="c1" /><div class="c2"><svg class="i14" viewBox="0 0 16 16" v-html="ic.frame" />Master Rep</div>
          </div>
          <div class="scroller">
            <ul class="tree second">
              <li v-for="r in modelTree" :key="r.label" :class="['l' + r.level, { dim: r.dim }]">
                <i v-if="r.level" class="exp" :class="r.exp || 'leaf'" /><svg class="i16" viewBox="0 0 16 16" v-html="ic[r.icon]" /><span>{{ r.label }}</span>
              </li>
            </ul>
            <div class="c2b" />
            <div class="vbar"><i class="ar up" /><i class="thumb" /><i class="rest" /><i class="ar dn" /></div>
          </div>
          <div class="hbars">
            <div class="hbar"><i class="ar lf" /><i class="ar rt" /></div>
            <div class="hbar small"><i class="ar lf" /><i class="th" /><i class="ar rt" /></div>
          </div>
        </section>
      </aside>

      <main class="view">
        <svg class="scene" viewBox="282 165 1638 878" preserveAspectRatio="xMidYMid meet" role="img" aria-label="Stress plot of flanged pipe joint">
          <defs>
            <linearGradient id="pipeG" x2="0" y2="1"><stop offset="0" stop-color="#0303b0" /><stop offset=".2" stop-color="#0303be" /><stop offset=".65" stop-color="#0303b4" /><stop offset=".9" stop-color="#020292" /><stop offset="1" stop-color="#020280" /></linearGradient>
            <linearGradient id="flG" x2="0" y2="1"><stop offset="0" stop-color="#0303a4" /><stop offset=".15" stop-color="#0505b6" /><stop offset=".5" stop-color="#0505bc" /><stop offset=".75" stop-color="#0404ac" /><stop offset=".92" stop-color="#030388" /><stop offset="1" stop-color="#020274" /></linearGradient>
            <linearGradient id="faceG" x2="1" y2=".8"><stop offset="0" stop-color="#060696" /><stop offset=".5" stop-color="#05059a" /><stop offset="1" stop-color="#0404a8" /></linearGradient>
            <linearGradient id="boreG" x2="1" y2=".8"><stop offset="0" stop-color="#020290" /><stop offset=".35" stop-color="#0202b2" /><stop offset="1" stop-color="#0303c2" /></linearGradient>
            <radialGradient id="haze"><stop offset="0" stop-color="#0828cc" stop-opacity=".45" /><stop offset="1" stop-color="#0828cc" stop-opacity="0" /></radialGradient>
            <radialGradient id="glow"><stop offset=".5" stop-color="#0c86a8" stop-opacity=".95" /><stop offset=".72" stop-color="#0660b8" stop-opacity=".5" /><stop offset="1" stop-color="#0430b0" stop-opacity="0" /></radialGradient>
          </defs>
          <g fill="#2b0f55">
            <path v-for="(c, n) in cones" :key="n" d="M-5 -5Q-3 -8 0 -8T5 -5L1 6Z" :transform="`translate(${c[0]} ${c[1]}) rotate(${c[2]}) scale(0.8)`" />
          </g>
          <g :transform="axis" fill="none">
            <path :d="barrel(-384, -150, 151)" fill="url(#pipeG)" />
            <path :d="barrel(-165, 0, 252)" fill="url(#flG)" />
            <path :d="arc(-165, 252)" stroke="#cdbfae" />
            <ellipse cx="-265" cy="20" rx="70" ry="140" fill="url(#haze)" opacity=".6" />
            <ellipse cx="-170" cy="-190" rx="60" ry="60" fill="url(#haze)" opacity=".5" />
            <path :d="arc(-74, 252)" stroke="#055cf0" />
            <path :d="arc(-37, 252)" stroke="#055cf0" />
            <ellipse :rx="252 * K" ry="252" fill="url(#faceG)" />
            <path :d="arc(0, 252)" stroke="#c9a9b6" />
            <ellipse cx="-90" cy="10" rx="40" ry="120" fill="url(#haze)" opacity=".7" />
          </g>
          <g v-for="(h, n) in holes" :key="'h' + n" :transform="`translate(${h[0]} ${h[1]}) rotate(13)`">
            <ellipse cx="15" cy="1" rx="15" ry="22" fill="#0534cc" opacity=".8" />
            <ellipse cx="1" rx="25" ry="32" fill="url(#glow)" />
            <ellipse rx="14" ry="19" fill="#0560e2" stroke="#4d97a8" />
            <path d="M4 -18Q-6 0 0 19A14 19 0 0 0 4 -18Z" fill="#0649d4" />
          </g>
          <g :transform="axis" fill="none">
            <ellipse :rx="170 * K" ry="170" stroke="#6666a4" />
            <path :d="barrel(8, 218, 157)" fill="url(#pipeG)" />
            <ellipse cx="-72" cy="0" rx="32" ry="100" fill="url(#haze)" />
            <path :d="arc(8, 157)" stroke="#8484bc" />
            <path d="M8 -157H155M8 157H165" stroke="#8888a4" stroke-dasharray="3 3" />
            <ellipse cx="218" :rx="157 * K" ry="157" fill="#02028e" stroke="#a090a8" />
            <ellipse cx="218" :rx="145 * K" ry="145" fill="url(#boreG)" stroke="#9080b0" />
          </g>
          <g v-for="(p, n) in preloads" :key="'p' + n" :transform="`translate(${p[0]} ${p[1]}) rotate(13)`">
            <path d="M-31 -2H-12V2H-31Z" fill="#f9a308" />
            <path d="M12 -2H31V2H12Z" fill="#f09a08" />
            <path d="M-12 -7Q-16 0 -12 7Q-7 7 -5 2L0 0L-5 -2Q-7 -7 -12 -7Z" fill="#fbaa12" />
            <path d="M12 -7Q16 0 12 7Q7 6 5 2L0 0L5 -2Q7 -6 12 -7Z" fill="#d98a08" />
          </g>
          <g transform="translate(459 281)"><circle r="7.500" fill="#e8f4fb" stroke="#2587c8" stroke-width="4" /><circle r="9.500" fill="none" stroke="#a5cfe9" /><circle r="3" fill="#fff" /></g>
        </svg>

        <div class="vtools" role="toolbar" aria-label="Graphics toolbar">
          <button v-for="v in viewTools" :key="v" type="button" :aria-label="v" :class="{ on: viewOn.includes(v) }"><svg class="i16" viewBox="0 0 16 16" v-html="ic[v]" /></button>
        </div>

        <section class="legend">
          <label v-for="s in legendSelects" :key="s.name" class="sel"><select :aria-label="s.name"><option>{{ s.value }}</option></select><i class="caret" /></label>
          <button type="button" class="minus" aria-label="Collapse legend"><i /></button>
          <div class="scale"><div class="ramp" /><ol><li v-for="v in legend" :key="v">{{ v }}</li></ol></div>
          <div class="lbtns">
            <button type="button" aria-label="Continuous"><svg class="i20" viewBox="0 0 16 16" v-html="ic.cfield" /></button>
            <button type="button" class="on" aria-label="Banded"><svg class="i20" viewBox="0 0 16 16" v-html="ic.bands" /></button>
            <button type="button" aria-label="Wireframe"><svg class="i20" viewBox="0 0 16 16" v-html="ic.wire" /></button>
            <button type="button" aria-label="Swap"><svg class="i20" viewBox="0 0 16 16" v-html="ic.swap" /></button>
          </div>
        </section>

        <svg class="triad" viewBox="0 0 116 125" aria-hidden="true">
          <path d="M58 51L76 55L81 77L64 89L46 85L41 63ZM41 63L59 67L76 55M59 67L64 89M63 73L81 77M63 73L46 85M63 73L58 51M58 51L50 20M81 77L109 83M46 85L22 102" fill="none" stroke="#4e5058" />
          <g font-size="12" fill="#4b3480"><text x="44" y="20">Y</text><text x="105" y="89">X</text><text x="15" y="109">Z</text></g>
        </svg>
      </main>
    </div>

    <footer class="status">
      <button type="button" class="on" aria-label="Navigator"><svg class="i16" viewBox="0 0 16 16" v-html="ic.paneEye" /></button>
      <button type="button" aria-label="Browser"><svg class="i16" viewBox="0 0 16 16" v-html="ic.globe" /></button>
      <button type="button" aria-label="Full screen"><svg class="i16" viewBox="0 0 16 16" v-html="ic.square" /></button>
      <i class="vr" />
      <p class="msg">15:51 Feature redefined successfully.</p>
      <div class="right">
        <div class="cell wide" />
        <div class="cell c23"><svg class="i16" viewBox="0 0 16 16" v-html="ic.regenS" /></div>
        <div class="cell c41"><svg class="i16" viewBox="0 0 16 16" v-html="ic.bino" /><i class="caret" /></div>
        <div class="cell c66"><svg class="i16" viewBox="0 0 16 16" v-html="ic.marquee" /><i class="caret" /><svg class="i16" viewBox="0 0 16 16" v-html="ic.pickGray" /></div>
        <button type="button" class="selbox" aria-label="Selection filter"><svg class="i20" viewBox="0 0 16 16" v-html="ic.selBox" /></button>
        <label class="sel geo"><select aria-label="Filter"><option>Geometry</option></select><i class="caret" /></label>
      </div>
    </footer>
  </div>
</template>

<style>
html, body { margin: 0; }
</style>

<style scoped>
.app { display: flex; flex-direction: column; min-height: 100vh; min-width: 1540px; box-sizing: border-box; background: #f8fafb; color: #55585a; font: 10px/16px "Open Sans", "Noto Sans", sans-serif; border-left: 1px solid #55585c; }
.defs { position: absolute; }
button { font: inherit; color: inherit; background: none; border: 0; padding: 0; display: flex; align-items: center; justify-content: center; box-sizing: border-box; }
ul, ol, h1, p { margin: 0; padding: 0; list-style: none; }
svg { flex: none; display: block; overflow: visible; }
.i12 { width: 12px; height: 12px; } .i14 { width: 14px; height: 14px; } .i16 { width: 16px; height: 16px; } .i20 { width: 20px; height: 20px; } .i32 { width: 31px; height: 31px; }
.caret { display: inline-block; flex: none; border: 3px solid transparent; border-top: 4px solid #5c6062; border-bottom: 0; }
.vr { width: 1px; height: 24px; background: #c8cccd; flex: none; }

.title { display: flex; align-items: center; height: 28px; box-sizing: border-box; background: linear-gradient(#e4e8e7, #d8dddb); border-top: 1px solid #f4f6f6; }
.lead { flex: 1 0 0; display: flex; align-items: center; }
.brand { display: flex; align-items: center; gap: 4px; width: 75px; padding-left: 7px; color: #5a5e60; }
.brand span { font: 500 18px/20px Inter, "Open Sans", sans-serif; }
.quick { display: flex; align-items: center; }
.quick button { padding: 0 4px; gap: 7px; height: 24px; }
.quick .dim .caret { border-top-color: #a9adad; }
.quick .custom { border-left: 1px solid #b8bdbc; padding: 0 8px; margin-left: 2px; }
.caret.bar { box-shadow: 0 -2px 0 #666; border-width: 4px 4px 0; }
h1 { font: 13px/18px "Open Sans", "Noto Sans", sans-serif; }
.win { flex: 1 0 0; display: flex; justify-content: flex-end; gap: 15px; padding-right: 9px; box-sizing: border-box; }

.tabs { display: flex; height: 29px; background: #42474a; color: #f0f1f1; font-size: 13px; line-height: 20px; }
.tabs .active { background: #f8fafc; color: #4b8d31; }
.tabs .file { background: #55b336; }
.help { margin-left: auto; display: flex; align-items: center; gap: 12px; padding-right: 6px; }
.learn { gap: 6px; }
.q { font-weight: 700; font-size: 13px; width: 10px; }
.caret.light { border-top-color: #fff; }

.ribbon { display: flex; height: 108px; box-sizing: border-box; background: #f8fafc; border-bottom: 1px solid #c3c6c8; font-size: 11px; }
.group { display: flex; flex-direction: column; padding: 1px 2px 0; border-right: 1px solid #cfd2d4; }
.group:first-child { padding-left: 1px; }
.items { display: flex; height: 81px; }
.big { flex-direction: column; justify-content: flex-start; padding-top: 3px; border: 1px solid transparent; text-align: center; }
.big.on { background: #e0e2e4; border-color: #c4c7c9; }
.lbl { white-space: pre; margin-top: 10px; line-height: 16px; }
.caret.in { margin: 0 0 3px 4px; border-width: 4px 3px 0; }
.caret.under { margin-top: 5px; }
.smalls { display: flex; flex-direction: column; width: 81px; gap: 11px; padding-top: 4px; }
.smalls button { gap: 4px; justify-content: flex-start; }
.gname { text-align: center; line-height: 16px; padding-top: 5px; }

.body { display: flex; flex: 1; }
.side { width: 280px; display: flex; flex-direction: column; background: #f8fafb; box-sizing: border-box; border-right: 1px solid #dcdfe1; flex: none; }
.studies { flex: 1; display: flex; flex-direction: column; }
.ptabs { display: flex; height: 25px; background: #dbdedd; }
.ptabs button { width: 31px; }
.ptabs .cur { background: #f8fafb; }
.ptool { display: flex; align-items: center; height: 34px; padding: 0 5px 0 14px; }
.ptool button { width: 24px; height: 24px; }
.ptool .last { margin-left: auto; }
.ptool .on { background: #dfe1e2; border: 1px solid #b9bcbe; }
.ptool > svg { margin-left: 6px; }
.ptool .grip { margin: 0 11px 0 7px; }
.ptool .vr { margin: 0 4px; }
.caret.big-c { border-width: 7px 4px 0; }
.grip { width: 0; height: 15px; border-left: 2px dotted #c9cccd; }
.colhead { height: 19px; margin: 0 5px 0 8px; border-bottom: 1px solid #d5d8d9; padding-left: 33px; display: flex; }
.colhead span { flex: 1; border: solid #d5d8d9; border-width: 0 1px; }
.tree { display: grid; }
.tree li { display: flex; align-items: center; white-space: nowrap; color: #4e5153; }
.tree li span { margin-left: 5px; }
.tree .dim { color: #b5b8b9; }
.exp { width: 12px; height: 10px; margin-right: 6px; display: flex; align-items: center; justify-content: center; flex: none; }
.exp::before { content: ""; border: 4px solid transparent; }
.open::before { border-top: 5px solid #6a6d6f; border-bottom: 0; }
.closed::before { border-left: 5px solid #6a6d6f; border-right: 0; }
.leaf::before { border: 0; width: 9px; height: 1px; background: #ccd0d1; margin-left: 12px; }
.first { height: 123px; grid-template-rows: repeat(7, 1fr); }
.first .l0 { padding-left: 44px; } .first .l1 { padding-left: 46px; } .first .l2 { padding-left: 66px; } .first .l3 { padding-left: 86px; }
.second { height: 352px; width: 190px; flex: none; grid-template-rows: repeat(20, 1fr); }
.second .l0 { padding-left: 3px; } .second .l1 { padding-left: 4px; } .second .l2 { padding-left: 24px; }
.two { border-top: 1px solid #d3d6d7; }
.two .vr { margin: 0 4px; }
.search { display: flex; align-items: center; height: 27px; padding-left: 11px; }
.box { display: flex; align-items: center; width: 203px; height: 27px; margin: 0 6px 0 3px; border: 1px solid #b5b9bb; background: #fff; box-sizing: border-box; }
.box input { flex: 1; min-width: 0; border: 0; outline: 0; background: none; font: inherit; }
.box button { margin-right: 3px; }
.pl { margin-left: 9px; }
.cols { display: flex; height: 20px; margin: 5px 5px 0 8px; border-bottom: 1px solid #d5d8d9; font-size: 11px; line-height: 20px; color: #444; }
.c1 { width: 190px; flex: none; border-right: 1px solid #d5d8d9; }
.c2 { display: flex; align-items: center; gap: 1px; padding-left: 5px; overflow: hidden; white-space: nowrap; }
.scroller { display: flex; height: 344px; overflow: hidden; margin: 0 5px 0 8px; }
.c2b { flex: 1; border-left: 1px solid #e3e6e7; }
.vbar { width: 14px; border: 1px solid #d0d3d4; border-width: 0 1px; box-sizing: border-box; display: flex; flex-direction: column; background: #f8fafb; }
.ar { display: flex; align-items: center; justify-content: center; width: 12px; height: 14px; flex: none; }
.ar::before { content: ""; border: 4px solid transparent; }
.up::before { border-bottom: 5px solid #9b9ea0; border-top: 0; }
.dn::before { border-top: 5px solid #9b9ea0; border-bottom: 0; }
.lf::before { border-right: 5px solid #9b9ea0; border-left: 0; }
.rt::before { border-left: 5px solid #9b9ea0; border-right: 0; }
.thumb { flex: 1; border: solid #c5c8ca; border-width: 1px 0; }
.rest { height: 54px; background: #dfe2e2; }
.hbars { display: flex; margin: 0 19px 6px 8px; }
.hbar { display: flex; justify-content: space-between; width: 190px; height: 14px; box-sizing: border-box; border: 1px solid #d5d8d9; align-items: center; background: #fdfdfd; }
.hbar.small { flex: 1; width: auto; background: #dfe2e2; }
.hbar.small .ar { background: #f8fafb; height: 12px; }
.th { width: 20px; height: 12px; background: #fbfcfc; border: solid #c5c8ca; border-width: 0 1px; margin-right: auto; }

.view { position: relative; flex: 1; min-width: 0; background: #e8eaee; border-left: 1px solid #e3e6e8; display: flex; }
.scene { width: 100%; flex: 1; overflow: hidden; }
.vtools { position: absolute; top: 6px; left: 50%; width: 492px; height: 30px; margin-left: -245px; box-sizing: border-box; display: flex; align-items: center; padding: 0 2px; background: #f8fafc; border: 1px solid #b9bcbf; }
.vtools button { flex: 1; height: 24px; border: 1px solid transparent; }
.vtools .on { background: #dfe1e4; border-color: #babdc0; }
.legend { position: absolute; top: 0; right: 0; width: 146px; height: 397px; box-sizing: border-box; border: solid #d3d6d9; border-width: 0 0 1px 1px; background: #eef0f3; padding: 6px 6px 0 7px; display: flex; flex-direction: column; }
.sel { position: relative; display: flex; margin-bottom: 3px; }
.sel select { appearance: none; width: 100%; height: 22px; border: 1px solid #babdc0; background: #f9fafb; border-radius: 0; padding: 0 18px 0 8px; font: inherit; color: #4f5254; }
.sel .caret { position: absolute; right: 4px; top: 9px; }
.minus { width: 13px; height: 12px; background: #727679; border-radius: 3px; margin: 4px 0 0 2px; }
.minus i { width: 7px; height: 2px; background: #fff; }
.scale { display: flex; margin-top: 10px; }
.ramp { width: 30px; height: 225px; margin: 8px 0; box-sizing: border-box; border: solid #7d7f96; border-width: 1px 0; background: linear-gradient(#d40000, #ff8000 14%, #ffa800 24%, #ffff00 38%, #00cf10 52%, #00ffff 64%, #00b4ff 76%, #0060ff 88%, #0000ff); }
.scale ol { display: flex; flex-direction: column; justify-content: space-between; margin-left: 13px; color: #909396; }
.scale li:first-child, .scale li:last-child { color: #4a4d50; }
.lbtns { display: flex; gap: 5px; margin-top: 10px; }
.lbtns button { width: 28px; height: 28px; }
.lbtns .on { background: #d6d9dc; border: 1px solid #b5b8bb; }
.triad { position: absolute; right: 0; bottom: 0; width: 116px; height: 125px; border: solid #84878d; border-width: 1px 0 0 1px; box-sizing: border-box; overflow: hidden; }

.status { display: flex; align-items: center; height: 37px; box-sizing: border-box; border-top: 1px solid #c5c8ca; padding-left: 5px; background: #f7f9f9; }
.status > button { width: 22px; height: 24px; margin: 3px 3px 0 0; }
.status > button.on { background: #e0e3e3; border: 1px solid #b5b8ba; }
.status > .vr { margin: 0 5px 0 3px; }
.msg { display: flex; gap: 5px; align-self: flex-start; padding-top: 8px; }
.msg::before { content: ""; width: 4px; height: 4px; border-radius: 50%; background: #1f6a85; margin-top: 5px; }
.right { margin-left: auto; display: flex; align-items: center; padding-right: 16px; }
.cell { display: flex; align-items: center; justify-content: center; gap: 6px; height: 29px; border-left: 1px solid #c3c6c8; box-sizing: border-box; }
.wide { width: 63px; } .c23 { width: 23px; } .c41 { width: 42px; }
.c66 { width: 66px; }
.c66 svg + .caret { margin-right: 3px; }
.selbox { width: 40px; height: 29px; border: 1px solid #b9bcbe; }
.geo { width: 174px; margin: 0 0 0 95px; font-size: 11px; }
.geo select { height: 24px; }
.geo .caret { right: 4px; top: 10px; }
.geo::after { content: ""; position: absolute; right: 15px; top: 1px; height: 22px; border-left: 1px solid #babdc0; }
</style>
